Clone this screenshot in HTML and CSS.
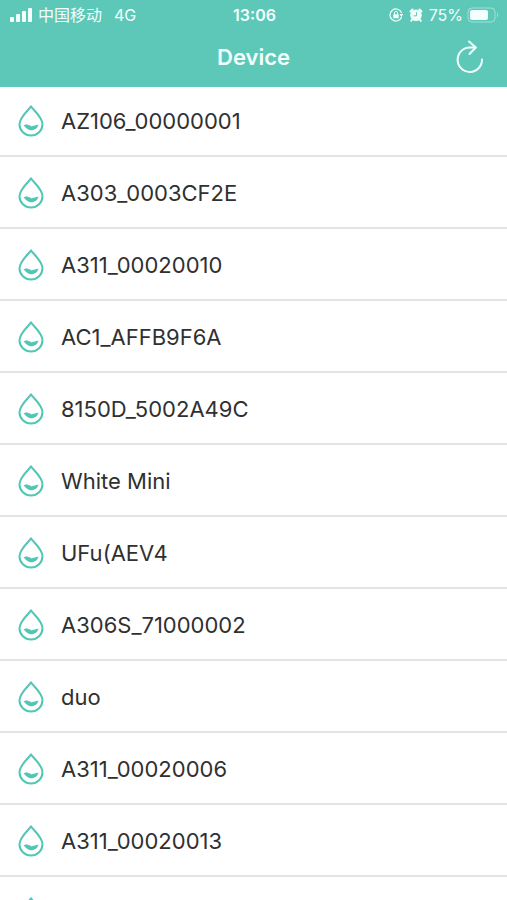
FILE: index.html
```
<!doctype html>
<html lang="en">

<head>
    <meta charset="utf-8">
    <meta name="viewport" content="width=device-width, initial-scale=1">
    <title>Device</title>
    <link rel="stylesheet" href="styles.css">
</head>

<body>
    <!-- shared drop icon -->
    <svg class="sprite" aria-hidden="true">
        <symbol id="drop" viewBox="0 0 26 32">
            <path d="M13 1.5C10 5.5 1.5 12.500 1.500 19.300A11.500 11.300 0 0 0 24.500 19.300C24.500 12.500 16 5.500 13 1.500Z" fill="none" stroke="currentColor" stroke-width="2"/>
            <path d="M5.500 20.500C8 18.800 10.500 19.800 12.500 21C15 21.800 17 20 20.500 19.800C19.500 23 17 25.300 13.500 25.300C10 25.300 8 22.800 5.500 20.500Z" fill="currentColor"/>
        </symbol>
    </svg>

    <header class="header">
        <div class="status">
            <div class="status-left">
                <svg class="signal" viewBox="0 0 22 14" fill="currentColor">
                    <rect x="0" y="9" width="4" height="5" rx="1"/>
                    <rect x="6" y="6" width="4" height="8" rx="1"/>
                    <rect x="12" y="3" width="4" height="11" rx="1"/>
                    <rect x="18" y="0" width="4" height="14" rx="1"/>
                </svg>
                <span class="carrier" lang="zh">中国移动</span>
                <span>4G</span>
            </div>
            <span class="clock">13:06</span>
            <div class="status-right">
                <svg class="lock" viewBox="0 0 14 14">
                    <path d="M12.600 9A6 6 0 1 1 12.600 5" fill="none" stroke="currentColor" stroke-width="1.200"/>
                    <path d="M10.500 6H14.200L12.400 9Z" fill="currentColor"/>
                    <rect x="4.300" y="6.300" width="5.400" height="4" rx=".6" fill="currentColor"/>
                    <path d="M5.400 6.500V5a1.600 1.600 0 0 1 3.200 0v1.500" fill="none" stroke="currentColor"/>
                </svg>
                <svg class="alarm" viewBox="0 0 14 14">
                    <circle cx="7" cy="7.300" r="5.800" fill="currentColor"/>
                    <path d="M1.500 3.500L3.500 1.500M10.500 1.500L12.500 3.500M3.200 11.500L2.200 12.800M10.800 11.500L11.800 12.800" stroke="currentColor" stroke-width="2" stroke-linecap="round"/>
                    <path d="M7.500 4.300V7.800H4.500" fill="none" stroke="#5dc8b8" stroke-width="1"/>
                </svg>
                <span class="percent">75%</span>
                <svg class="battery" viewBox="0 0 32 16">
                    <rect x="1" y="1" width="27" height="14" rx="4" fill="none" stroke="currentColor" stroke-opacity=".45"/>
                    <rect x="3" y="3" width="18" height="10" rx="2" fill="currentColor"/>
                    <path d="M30 5.500C31.500 6.500 31.500 9.500 30 10.500Z" fill="currentColor" fill-opacity=".45"/>
                </svg>
            </div>
        </div>
        <div class="navbar">
            <h1 class="title">Device</h1>
            <button class="refresh" type="button" aria-label="Refresh">
                <svg viewBox="0 0 28 34" fill="none" stroke="currentColor" stroke-width="2" stroke-linecap="round" stroke-linejoin="round">
                    <path d="M26 19.500A12.200 12.200 0 1 1 13.800 7.500H19.500"/>
                    <path d="M13 1.500L19.800 7.500L13.500 14"/>
                </svg>
            </button>
        </div>
    </header>

    <ul class="devices">
        <li class="device"><svg class="drop"><use href="#drop"/></svg>AZ106_00000001</li>
        <li class="device"><svg class="drop"><use href="#drop"/></svg>A303_0003CF2E</li>
        <li class="device"><svg class="drop"><use href="#drop"/></svg>A311_00020010</li>
        <li class="device"><svg class="drop"><use href="#drop"/></svg>AC1_AFFB9F6A</li>
        <li class="device"><svg class="drop"><use href="#drop"/></svg>8150D_5002A49C</li>
        <li class="device"><svg class="drop"><use href="#drop"/></svg>White Mini</li>
        <li class="device"><svg class="drop"><use href="#drop"/></svg>UFu(AEV4</li>
        <li class="device"><svg class="drop"><use href="#drop"/></svg>A306S_71000002</li>
        <li class="device"><svg class="drop"><use href="#drop"/></svg>duo</li>
        <li class="device"><svg class="drop"><use href="#drop"/></svg>A311_00020006</li>
        <li class="device"><svg class="drop"><use href="#drop"/></svg>A311_00020013</li>
        <li class="device"><svg class="drop"><use href="#drop"/></svg></li>
    </ul>
</body>

</html>
```

FILE: styles.css
```
* {
    box-sizing: border-box;
}

body {
    margin: 0;
    height: 100vh;
    display: flex;
    flex-direction: column;
    background: #fff;
    color: #303030;
    font-family: Inter, "Noto Sans CJK SC", sans-serif;
}

.sprite {
    display: none;
}

.header {
    flex: none;
    background: #5dc8b8;
    color: #f2fffc;
}

/* status bar */
.status {
    display: grid;
    grid-template-columns: 1fr auto 1fr;
    align-items: center;
    height: 30px;
    padding: 0 8px 0 10px;
    font-size: 16px;
    line-height: 20px;
}

.status-left,
.status-right {
    display: flex;
    align-items: center;
}

.status-right {
    justify-content: flex-end;
}

.signal {
    width: 22px;
    height: 14px;
    margin-right: 6px;
}

.carrier {
    margin-right: 12px;
}

.clock {
    font-weight: 600;
}

.lock,
.alarm {
    width: 14px;
    height: 14px;
    margin-right: 6px;
}

.percent {
    margin-right: 4px;
}

.battery {
    width: 32px;
    height: 16px;
}

/* title bar */
.navbar {
    display: grid;
    grid-template-columns: 1fr auto 1fr;
    align-items: center;
    height: 57px;
    padding: 0 23px 3px;
}

.title {
    grid-column: 2;
    margin: 0;
    font-size: 22px;
    line-height: 28px;
    font-weight: 600;
}

.refresh {
    justify-self: end;
    padding: 0;
    border: 0;
    background: none;
    color: inherit;
    cursor: pointer;
}

.refresh svg {
    display: block;
    width: 28px;
    height: 34px;
}

/* device list */
.devices {
    flex: 1;
    min-height: 0;
    margin: 0;
    padding: 0;
    list-style: none;
    overflow-y: auto;
    scrollbar-width: none;
}

.device {
    display: flex;
    align-items: center;
    gap: 17px;
    height: 72px;
    padding: 2px 18px 0;
    border-bottom: 2px solid #e4e4e6;
    font-size: 22px;
    line-height: 28px;
}

.device:first-child {
    height: 70px;
    padding-top: 0;
}

.drop {
    flex: none;
    width: 26px;
    height: 32px;
    color: #52c6b4;
}
```
